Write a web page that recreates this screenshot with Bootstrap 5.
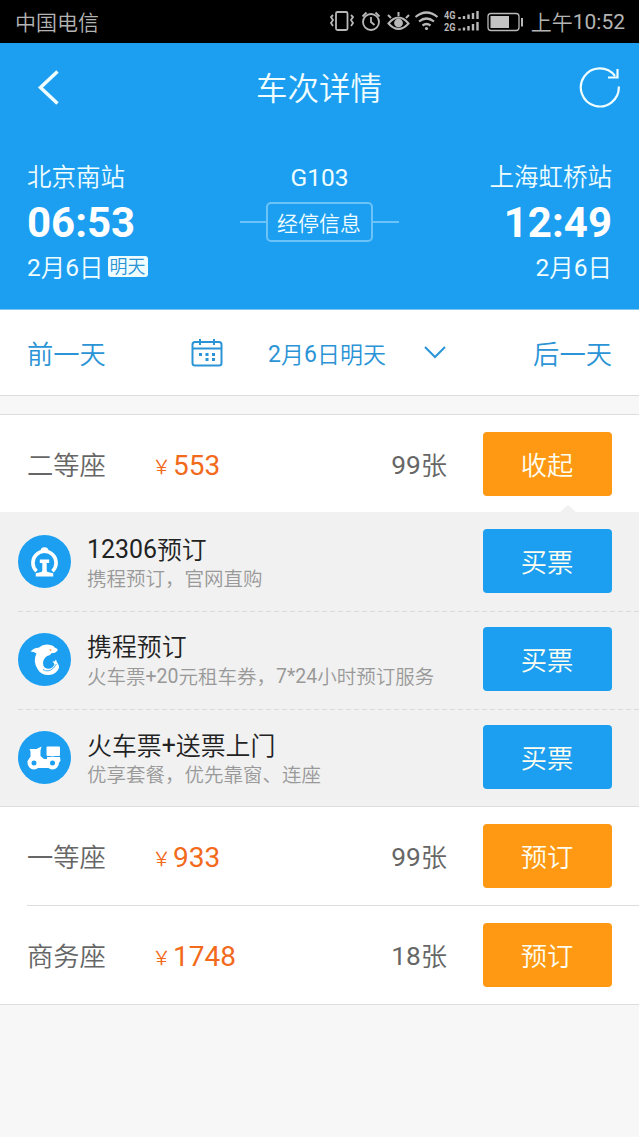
<!DOCTYPE html>
<html lang="zh-CN">
<head>
<meta charset="utf-8">
<meta name="viewport" content="width=device-width, initial-scale=1">
<title>车次详情</title>
<link rel="stylesheet" href="https://cdn.jsdelivr.net/npm/bootstrap@5.3.0/dist/css/bootstrap.min.css">
<style>
  :root { --sky: #1c9ff1; --sky-text: #2a94d6; --amber: #ff9913; --price: #f26a1b; }
  body { font-family: Roboto, "Noto Sans CJK SC", sans-serif; font-weight: 350; background: #fff; line-height: 1; overflow: hidden; }
  .screen { width: 639px; height: 1137px; background: #f7f7f7; }
  svg { display: block; flex: none; }
  .num { font-weight: 400; }
  .status .num, .side .num, .day .num, .seat .num, .offer-name .num, .offer-note .num { vertical-align: 1px; }
  .status { height: 43px; background: #000; color: #b4b4b4; font-size: 21px; padding: 3px 14px 0 15px; }
  .hero { height: 267px; background: var(--sky); color: #f0fdff; border-bottom: 1px solid #7cc6f4; }
  .titlebar { height: 90px; padding: 0 18px 0 37px; font-size: 31.5px; }
  .titlebar .heading { width: 127px; padding-top: 4px; margin-left: 177px; }
  .side { width: 204px; }
  .trip { padding: 32px 27px 0; font-size: 24.5px; }
  .trip .ln { height: 26px; line-height: 26px; white-space: nowrap; }
  .trip .train { height: 24px; margin-bottom: 13px; }
  .clock { font-size: 42px; font-weight: 700; height: 43px; line-height: 43px; margin: 10px 0 11px; color: #fff; }
  .tag { background: #f0fdff; color: var(--sky-text); font-size: 18px; line-height: 22px; width: 40px; height: 21px; border-radius: 3px; margin: -3px 0 0 4px; text-align: center; }
  .stops { width: 107px; height: 40px; border: 2px solid #6cc3f7; border-radius: 5px; font-size: 21px; line-height: 40px; padding: 0 1px 0 0; color: inherit; font-weight: inherit; }
  .dash { width: 26px; height: 2px; background: #6cc3f7; }
  .datebar { height: 86px; background: #fff; border-bottom: 1px solid #dcdcdc; color: var(--sky-text); font-size: 26.3px; padding: 0 27px; }
  .datebar span { padding-top: 5px; }
  .day { font-size: 23px; margin: 0 38px 0 45px; }
  .seats { background: #fff; border-bottom: 1px solid #dedede; border-top: 1px solid #dedede; margin-top: 18px; }
  .seat { height: 98px; padding: 0 27px; color: #666; font-size: 26.3px; }
  .seat-name { width: 127px; }
  .seat > span { padding-top: 4px; }
  .seat > .price { color: var(--price); font-size: 28px; font-weight: 400; }
  .yen { font-size: 19px; width: 19px; font-family: "Noto Sans CJK SC", sans-serif; display: inline-block; font-weight: 350; margin-left: -2px; margin-right: 2px; vertical-align: 1px; }
  .act { width: 129px; height: 64px; border-radius: 4px; color: #fdfdf0; font-size: 26.3px; font-weight: inherit; line-height: 69px; padding: 0 1px 0 0; border: 0; margin-left: 36px; overflow: hidden; }
  .act-amber { background: var(--amber); } .act-sky { background: var(--sky); }
  .offers { background: #f1f1f1; border-bottom: 1px solid #dedede; margin-top: -1px; }
  .notch { position: absolute; top: -7px; left: 560px; }
  .offer { height: 98px; margin-left: 18px; padding-right: 27px; }
  .offer + .offer { background: repeating-linear-gradient(90deg, #dadada 0 5px, transparent 5px 8px) 0 1px / 100% 1px no-repeat; }
  .offer-text { margin: 4px 0 0 16px; }
  .offer-name { font-size: 24.9px; line-height: 28px; color: #222; }
  .offer-note { font-size: 19.5px; line-height: 22px; color: #999; margin-top: 4px; white-space: nowrap; }
  .rule { height: 1px; background: #dedede; margin-left: 27px; }
</style>
</head>
<body>
<main class="screen d-flex flex-column">
  <div class="status d-flex align-items-center justify-content-between">
    <span>中国电信</span>
    <div class="d-flex align-items-center">
      <svg width="204" height="26" viewBox="327 10 204 26" fill="none" stroke="#b8b8b8" stroke-width="1.8">
        <rect x="336" y="12" width="11.500" height="18" rx="1.500"/>
        <path d="M333 15l-2 2 2 3-2 3 2 3M351 15l2 2-2 3 2 3-2 3" stroke-width="1.800"/>
        <circle cx="371" cy="22" r="8"/><path d="M371 17v5l3.500 3M362.500 16.500l4-4M379.500 16.500l-4-4"/>
        <path d="M388.500 23.500q10-12 20 0q-10 11-20 0zM398.500 16v-4M391 18l-3-3M406 18l3-3" stroke-width="2"/><circle cx="398.500" cy="23" r="3.500" fill="#b8b8b8"/>
        <path d="M415.500 17q11-9 22 0M419 21.500q7.500-6 15 0M422.500 25.500q4-3 8 0" stroke-width="2.200"/><circle cx="426.500" cy="28.500" r="1.600" fill="#b8b8b8" stroke="none"/>
        <g fill="#b8b8b8" stroke="none" font-family="Roboto" font-size="10" font-weight="700"><text x="444" y="19" textLength="11.500" lengthAdjust="spacingAndGlyphs">4G</text><text x="444" y="30.500" textLength="11.500" lengthAdjust="spacingAndGlyphs">2G</text></g>
        <path d="M459.500 17v2M464 16v3M468.500 14.500v4.500M473 13v6M477.500 11v8M459.500 28.500v2M464 27.500v3M468.500 26v4.500M473 24v6.500M477.500 22v8.500" stroke-width="2.400"/>
        <rect x="488" y="13.500" width="31" height="17" rx="3" stroke-width="1.300"/><rect x="490.500" y="16" width="18.500" height="12" fill="#c4c4c4" stroke="none"/><path d="M522 18v8.500" stroke-width="2"/>
      </svg>
      <span class="text-nowrap">上午<span class="num">10:52</span></span>
    </div>
  </div>

  <header class="hero">
    <div class="titlebar d-flex align-items-center">
      <svg width="42" height="40" viewBox="0 0 42 40" fill="none" stroke="#f0fdff" stroke-width="3.500"><path d="M20.500 3.500L3.500 19.500l17 16"/></svg>
      <span class="heading text-nowrap">车次详情</span>
      <svg class="ms-auto" width="42" height="42" viewBox="0 1 42 42" fill="none" stroke="#f0fdff" stroke-width="2.200"><path d="M39.800 20.500A19 19 0 1 1 36 10M38.500 3v8.500h-9.500"/></svg>
    </div>
    <div class="trip d-flex justify-content-between">
      <div class="side">
        <div class="ln">北京南站</div>
        <div class="clock">06:53</div>
        <div class="ln d-flex align-items-center"><span><span class="num">2</span>月<span class="num">6</span>日</span><span class="tag">明天</span></div>
      </div>
      <div class="d-flex flex-column align-items-center">
        <div class="ln train num">G103</div>
        <div class="d-flex align-items-center">
          <span class="dash"></span>
          <button type="button" class="btn stops">经停信息</button>
          <span class="dash"></span>
        </div>
      </div>
      <div class="side text-end">
        <div class="ln">上海虹桥站</div>
        <div class="clock">12:49</div>
        <div class="ln"><span class="num">2</span>月<span class="num">6</span>日</div>
      </div>
    </div>
  </header>

  <nav class="datebar d-flex align-items-center justify-content-between">
    <span>前一天</span>
    <div class="d-flex align-items-center">
      <svg width="32" height="28" viewBox="0 0 32 28" fill="none" stroke="#2a94d6" stroke-width="2"><rect x="1.500" y="3" width="29" height="23.500" rx="2.500"/><path d="M1.500 9.500h29M9 0v6M23 0v6"/><path d="M8 15.500h3M14.500 15.500h3M21 15.500h3M14.500 20.500h3M21 20.500h3" stroke-width="3"/></svg>
      <div class="day text-nowrap pt-1"><b class="num">2</b>月<b class="num">6</b>日明天</div>
      <svg width="24" height="16" viewBox="1 0 24 16" fill="none" stroke="#2a94d6" stroke-width="2"><path d="M2 2l10 10L22 2"/></svg>
    </div>
    <span>后一天</span>
  </nav>

  <section class="seats">
    <div class="seat d-flex align-items-center">
      <span class="seat-name">二等座</span><span class="price"><span class="yen">￥</span>553</span>
      <span class="ms-auto"><b class="num">99</b>张</span><button type="button" class="btn act act-amber">收起</button>
    </div>
    <div class="offers position-relative">
      <svg class="notch" width="16" height="7" viewBox="0 0 16 7"><path d="M0 7l8-7 8 7z" fill="#f1f1f1"/></svg>
      <div class="offer d-flex align-items-center">
        <svg width="53" height="53" viewBox="0 0 53 53"><circle cx="26.500" cy="26.500" r="26.500" fill="#1c9ff1"/><path d="M18.500 36.200A11.600 11.600 0 1 1 34.500 36.200" fill="none" stroke="#fff" stroke-width="3.600"/><path d="M22.500 15.500q.5-3.300 4-3.300t4 3.300zM21.800 24.500h9.400v3.600h-2.500v7.400q0 1.500 2 1.800l4.500.9v3.300H17.800v-3.300l4.500-.9q2-.3 2-1.800v-7.400h-2.500z" fill="#fff"/></svg>
        <div class="offer-text"><div class="offer-name"><span class="num">12306</span>预订</div><div class="offer-note">携程预订，官网直购</div></div>
        <button type="button" class="btn act act-sky ms-auto">买票</button>
      </div>
      <div class="offer d-flex align-items-center">
        <svg width="53" height="53" viewBox="0 0 53 53"><circle cx="26.500" cy="26.500" r="26.500" fill="#1c9ff1"/><path d="M12.500 18.500q3.500-4 8-3.800 5-4 10.500-3 4.500.5 6 3 3.200 1 2.500 3-2 2.500-6 2.600-1.500 2.700-4 2.400-4.500 3-4.500 7.500.3 5.500 6 5.500 4-.5 5.500-4.500l-2-3 2 .3 1.500-2 .9 2.700q3 3.500 1.800 6.500-3 6-9.700 6.200-8 .3-11.500-6-5-8-1-15.500-3-2-6-1.900z" fill="#fff"/><path d="M25 36.500q5 3.500 10.500-1.500l3-4" fill="none" stroke="#1c9ff1" stroke-width=".8"/><circle cx="32.500" cy="17" r=".9" fill="#f3a55c"/></svg>
        <div class="offer-text"><div class="offer-name">携程预订</div><div class="offer-note">火车票<span class="num">+20</span>元租车券，<span class="num">7*24</span>小时预订服务</div></div>
        <button type="button" class="btn act act-sky ms-auto">买票</button>
      </div>
      <div class="offer d-flex align-items-center">
        <svg width="53" height="53" viewBox="0 0 53 53"><circle cx="26.500" cy="26.500" r="26.500" fill="#1c9ff1"/><path d="M11.500 18h7l5-2.500-1 4v5.500l3.500 3h3v-2h13l.5 4-2 2H12l-2.500-1.500 3-5v-5z" fill="#fff"/><rect x="28.500" y="15.500" width="13.500" height="9.500" rx="1" fill="#fff"/><path d="M19 37l2-8h10l2 8z" fill="#fff"/><g fill="#1c9ff1" stroke="#fff" stroke-width="4"><circle cx="16" cy="32" r="4.500"/><circle cx="34.500" cy="32" r="4.500"/></g></svg>
        <div class="offer-text"><div class="offer-name">火车票<span class="num">+</span>送票上门</div><div class="offer-note">优享套餐，优先靠窗、连座</div></div>
        <button type="button" class="btn act act-sky ms-auto">买票</button>
      </div>
    </div>
    <div class="seat d-flex align-items-center">
      <span class="seat-name">一等座</span><span class="price"><span class="yen">￥</span>933</span>
      <span class="ms-auto"><b class="num">99</b>张</span><button type="button" class="btn act act-amber">预订</button>
    </div>
    <div class="rule"></div>
    <div class="seat d-flex align-items-center">
      <span class="seat-name">商务座</span><span class="price"><span class="yen">￥</span>1748</span>
      <span class="ms-auto"><b class="num">18</b>张</span><button type="button" class="btn act act-amber">预订</button>
    </div>
  </section>
</main>
<script src="https://cdn.jsdelivr.net/npm/bootstrap@5.3.0/dist/js/bootstrap.bundle.min.js"></script>
</body>
</html>
